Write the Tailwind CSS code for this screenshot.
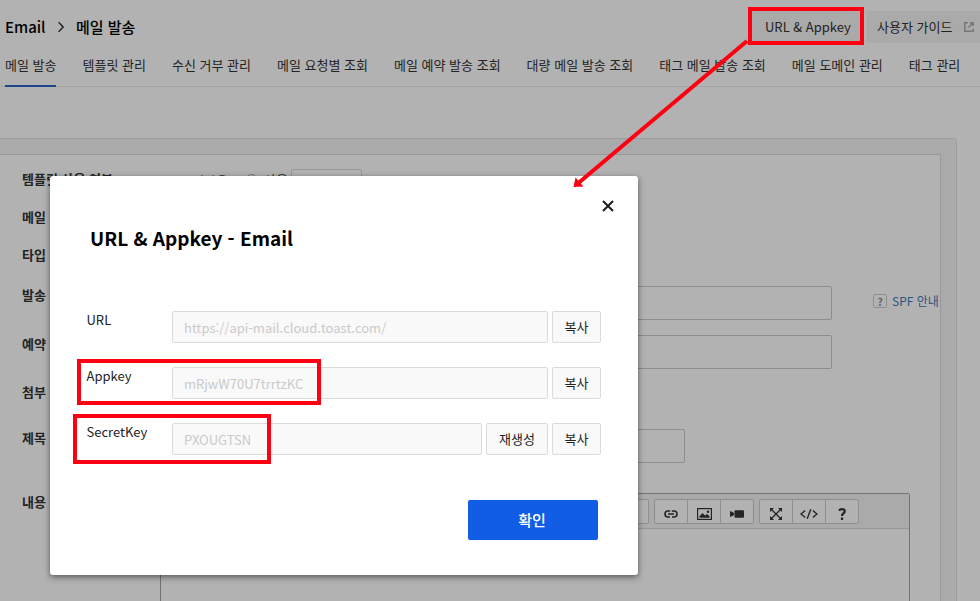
<!DOCTYPE html>
<html lang="ko">
<head>
<meta charset="utf-8">
<title>Email</title>
<script src="https://cdn.jsdelivr.net/npm/@tailwindcss/browser@4"></script>
</head>
<body class="relative h-[601px] w-[980px] overflow-hidden bg-[#b2b2b2] font-['Noto_Sans_CJK_KR',sans-serif] text-[13px] leading-5 text-[#232323]">
  <header class="flex h-[54px] items-center pl-[5px]">
    <h1 class="flex items-center text-[15px] font-medium leading-6 text-black">
      <span class="w-[53px]">Email</span>
      <svg class="mr-[12px] h-3 w-[6px]" viewBox="0 0 6 12" fill="none" stroke="#232323" stroke-width="1.4"><path d="M.6 1.2 5.2 6 .6 10.8"/></svg>
      <span>메일 발송</span>
    </h1>
    <div class="ml-auto flex items-center">
      <span class="mr-[4px] flex h-8 w-[114px] items-center whitespace-nowrap bg-[#aaaaaa] pl-[16px]">URL &amp; Appkey</span>
      <span class="flex h-8 w-[113px] items-center bg-[#aaaaaa] pl-[10px]">사용자 가이드
        <svg class="ml-3 h-[10px] w-[10px]" viewBox="0 0 10 10" fill="none" stroke="#777" stroke-width="1.5"><path d="M4 .8H.8v8.4h8.4V6.5M6 .8h3.2V4M9 1 4.5 5.5"/></svg>
      </span>
    </div>
  </header>
  <nav class="flex h-[33px] gap-[26px] whitespace-nowrap border-b border-[#a5a5a5] pl-[5px]">
    <a class="h-[33px] border-b-2 border-[#1d4789] pt-px">메일 발송</a>
    <a class="pt-px">템플릿 관리</a>
    <a class="pt-px">수신 거부 관리</a>
    <a class="pt-px">메일 요청별 조회</a>
    <a class="pt-px">메일 예약 발송 조회</a>
    <a class="pt-px">대량 메일 발송 조회</a>
    <a class="pt-px">태그 메일 발송 조회</a>
    <a class="pt-px">메일 도메인 관리</a>
    <a class="pt-px">태그 관리</a>
  </nav>

  <main class="mt-[51px] h-[480px] w-[957px] rounded-tr-[4px] border-r border-t border-[#9d9d9d] bg-[#aaaaaa] pt-[15px]">
    <div class="h-[470px] w-[941px] rounded-tr-[2px] border-r border-t border-[#989898] bg-[#b2b2b2] pl-[22px]">
      <div class="flex h-[43px] items-start pt-[14px]">
        <b class="w-[170px]">템플릿 사용 여부</b>
        <span class="w-[54px] pt-[2px]">미사용</span>
        <span class="mr-[7px] mt-[5px] size-[11px] rounded-full border border-[#777]"></span>
        <span class="w-[27px] pt-px">사용</span>
        <span class="h-[30px] w-[71px] rounded-[2px] border border-[#989898]"></span>
      </div>
      <div class="flex h-[39px] items-start pt-[9px]"><b>메일</b></div>
      <div class="flex h-[39px] items-start pt-[8px]"><b>타입</b></div>
      <div class="flex h-[49px] items-start pt-[10px]">
        <b class="-mt-px w-[138px] shrink-0">발송</b>
        <span class="h-[34px] w-[672px] shrink-0 rounded-[2px] border border-[#8d8d8d]"></span>
        <span class="ml-[41px] mt-[8px] flex size-[14px] shrink-0 items-center justify-center rounded-[2px] border border-[#909090] text-[11px] font-bold text-[#666]">?</span>
        <a class="ml-[5px] mt-[5px] whitespace-nowrap text-[12px] text-[#2b547f]">SPF 안내</a>
      </div>
      <div class="flex h-[49px] items-start pt-[10px]">
        <b class="-mt-px w-[138px]">예약</b>
        <span class="h-[34px] w-[672px] rounded-[2px] border border-[#8d8d8d]"></span>
      </div>
      <div class="flex h-[46px] items-start pt-[8px]"><b>첨부</b></div>
      <div class="flex h-[64px] items-start pt-[9px]">
        <b class="-mt-px w-[138px]">제목</b>
        <span class="h-[34px] w-[525px] rounded-[2px] border border-[#8d8d8d]"></span>
      </div>
      <div class="flex items-start pt-[9px]">
        <b class="-mt-px w-[138px]">내용</b>
        <div class="h-[120px] w-[750px] rounded-tr-[2px] border border-[#737373]">
          <div class="flex h-[35px] gap-[5px] border-b border-[#969696] bg-[#aaaaaa] pl-[393px] pt-[5px]">
            <div class="h-[25px] w-[95px] rounded-[2px] border border-[#8f8f8f] bg-[#b2b2b2]"></div>
            <div class="flex h-[25px] w-[100px] divide-x divide-[#8f8f8f] rounded-[2px] border border-[#8f8f8f] bg-[#b2b2b2]">
              <span class="flex flex-1 items-center justify-center pt-[4px]"><svg class="h-[8px] w-[14px]" viewBox="0 0 14 8" fill="none" stroke="#242424" stroke-width="1.6"><path d="M6 7H4A3 3 0 0 1 4 1H6.2M7.8 1H10A3 3 0 0 1 10 7H8M4 4H10"/></svg></span>
              <span class="flex flex-1 items-center justify-center pt-[4px]"><svg class="h-[12px] w-[15px]" viewBox="0 0 15 12"><rect x=".6" y=".6" width="13.8" height="10.8" fill="none" stroke="#242424" stroke-width="1.2"/><path d="M2.5 9.8V8.2L5.5 5 8 7.4 10 6 12.5 8.2V9.8Z" fill="#242424"/><circle cx="11" cy="3.8" r="1.2" fill="#242424"/></svg></span>
              <span class="flex flex-1 items-center justify-center pt-[4px]"><svg class="h-[8px] w-[14px]" viewBox="0 0 14 8" fill="#242424"><rect x="4.5" y=".2" width="9.5" height="7.6" rx="1"/><path d="M0 1.2H1L4 3V5L1 6.8H0Z"/></svg></span>
            </div>
            <div class="flex h-[25px] w-[100px] divide-x divide-[#8f8f8f] rounded-[2px] border border-[#8f8f8f] bg-[#b2b2b2]">
              <span class="flex flex-1 items-center justify-center pt-[4px]"><svg class="size-[12px]" viewBox="0 0 12 12" fill="none" stroke="#242424" stroke-width="1.3"><path d="M1 1 11 11M11 1 1 11"/><path d="M0 0H4L0 4ZM12 0H8L12 4ZM0 12H4L0 8ZM12 12H8L12 8Z" fill="#242424" stroke="none"/></svg></span>
              <span class="flex flex-1 items-center justify-center pt-[4px]"><svg class="h-[10px] w-[18px]" viewBox="0 0 18 10" fill="none" stroke="#242424" stroke-width="1.4"><path d="M5.2 1.5 1 5 5.2 8.5M12.8 1.5 17 5 12.8 8.5M10.8.3 7.2 9.7"/></svg></span>
              <span class="flex flex-1 items-center justify-center pt-[4px]"><svg class="h-[12px] w-[8px]" viewBox="0 0 8 12" fill="none" stroke="#242424" stroke-width="2.2"><path d="M1 2.6Q2 1.1 4 1.1 6.7 1.1 6.7 3.3 6.7 4.5 5.3 5.5 4 6.4 4 8M4 9.6V12"/></svg></span>
            </div>
          </div>
        </div>
      </div>
    </div>
  </main>

  <section class="absolute left-[50px] top-[176px] h-[399px] w-[588px] rounded-[3px] bg-white pl-[36px] shadow-[0_2px_6px_rgba(0,0,0,0.5)]">
    <svg class="absolute right-[24px] top-[24px] size-[12px]" viewBox="0 0 12 12" stroke="#1c1c1c" stroke-width="2"><path d="M1 1 11 11M11 1 1 11"/></svg>
    <h2 class="pl-[4px] pt-[47px] text-[19px] font-bold leading-[30px] text-black">URL &amp; Appkey - Email</h2>
    <div class="mt-[58px] flex h-[56px] gap-[4px]">
      <span class="-mt-px w-[82px] pl-[0.5px]">URL</span>
      <span class="h-8 w-[376px] rounded-[2px] border border-[#dbdbdb] bg-[#f9f9f9] pl-[11px] pt-[6px] text-[#cacaca]">https://api-mail.cloud.toast.com/</span>
      <span class="h-8 w-[49px] rounded-[2px] border border-[#dbdbdb] bg-[#f9f9f9] pt-[5px] text-center">복사</span>
    </div>
    <div class="flex h-[56px] gap-[4px]">
      <span class="-mt-px w-[82px] pl-[0.5px]">Appkey</span>
      <span class="h-8 w-[376px] rounded-[2px] border border-[#dbdbdb] bg-[#f9f9f9] pl-[11px] pt-[6px] text-[#cacaca]">mRjwW70U7trrtzKC</span>
      <span class="h-8 w-[49px] rounded-[2px] border border-[#dbdbdb] bg-[#f9f9f9] pt-[5px] text-center">복사</span>
    </div>
    <div class="flex h-[77px] gap-[4px]">
      <span class="-mt-px w-[82px] pl-[0.5px]">SecretKey</span>
      <span class="h-8 w-[310px] rounded-[2px] border border-[#dbdbdb] bg-[#f9f9f9] pl-[11px] pt-[6px] text-[#cacaca]">PXOUGTSN</span>
      <span class="h-8 w-[62px] rounded-[2px] border border-[#dbdbdb] bg-[#f9f9f9] pt-[5px] text-center">재생성</span>
      <span class="h-8 w-[49px] rounded-[2px] border border-[#dbdbdb] bg-[#f9f9f9] pt-[5px] text-center">복사</span>
    </div>
    <button class="ml-[382px] block h-[40px] w-[130px] rounded-[2px] bg-[#125de6] pr-[2px] text-[15px] font-medium text-white">확인</button>
  </section>

  <svg class="absolute left-0 top-0 h-[601px] w-[980px]" viewBox="0 0 980 601" fill="none" stroke="#ff0012" stroke-width="4">
    <rect x="750" y="9" width="112" height="34"/>
    <rect x="79" y="361" width="240" height="42"/>
    <rect x="75" y="416" width="194" height="46"/>
    <path d="M747 41 579 182.5"/>
    <path d="M573.5 187 575.5 177.5 583.5 186.5Z" fill="#ff0012" stroke="none"/>
  </svg>
</body>
</html>
